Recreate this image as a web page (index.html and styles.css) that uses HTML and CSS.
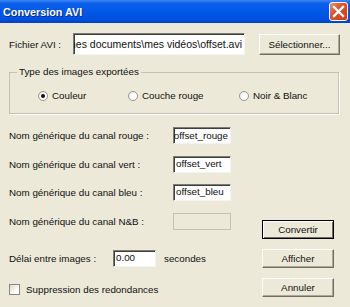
FILE: index.html
```html
<!DOCTYPE html>
<html lang="fr">
<head>
  <meta charset="UTF-8">
  <title>Conversion AVI</title>
  <link rel="stylesheet" href="styles.css">
</head>
<body>
  <div class="window">
    <div class="titlebar">
      <span class="title">Conversion AVI</span>
      <span class="close">
        <svg width="13" height="13" viewBox="0 0 13 13"><path d="M2 2 L11 11 M11 2 L2 11" stroke="#fff" stroke-width="2.4" stroke-linecap="square"/></svg>
      </span>
    </div>

    <div class="content">
      <div class="file-row">
        <span class="file-label">Fichier AVI :</span>
        <div class="field file-field"><span>c:\mes documents\mes vidéos\offset.avi</span></div>
        <div class="btn select-btn">Sélectionner...</div>
      </div>

      <div class="group">
        <span class="legend">Type des images exportées</span>
        <div class="radios">
          <span class="opt opt-1"><span class="radio checked"></span>Couleur</span>
          <span class="opt opt-2"><span class="radio"></span>Couche rouge</span>
          <span class="opt"><span class="radio"></span>Noir &amp; Blanc</span>
        </div>
      </div>

      <div class="bottom">
        <div class="fields">
          <div class="row"><span class="lbl">Nom générique du canal rouge :</span><div class="field name-field scrolled"><span>offset_rouge</span></div></div>
          <div class="row"><span class="lbl">Nom générique du canal vert :</span><div class="field name-field">offset_vert</div></div>
          <div class="row"><span class="lbl">Nom générique du canal bleu :</span><div class="field name-field">offset_bleu</div></div>
          <div class="row"><span class="lbl">Nom générique du canal N&amp;B :</span><div class="field name-field disabled"></div></div>
          <div class="row delay-row"><span class="delay-lbl">Délai entre images :</span><div class="field delay-field">0.00</div><span class="unit">secondes</span></div>
          <div class="row check-row"><span class="check"></span>Suppression des redondances</div>
        </div>
        <div class="actions">
          <div class="btn default-btn">Convertir</div>
          <div class="btn">Afficher</div>
          <div class="btn">Annuler</div>
        </div>
      </div>
    </div>
  </div>
</body>
</html>
```

FILE: styles.css
```css
body {
  margin: 0;
  font-family: "Liberation Sans", Arial, sans-serif;
  font-size: 9.8px;
  color: #111;
}

.window {
  width: 350px;
  height: 307px;
  background: #ece9d8;
  overflow: hidden;
}

.titlebar {
  height: 23px;
  display: flex;
  align-items: center;
  justify-content: space-between;
  padding: 0 2px 0 3px;
  background: linear-gradient(#3d87f5 0%, #0a5fe9 15%, #0056e6 60%, #0050de 85%, #0044c4 100%);
  box-sizing: border-box;
}

.title {
  color: #fff;
  font-family: "Liberation Sans", Arial, sans-serif;
  font-weight: bold;
  font-size: 10.8px;
  text-shadow: 1px 1px 0 #0a2a8a;
}

.close {
  width: 19px;
  height: 19px;
  box-sizing: border-box;
  border: 1px solid #fff;
  border-radius: 3px;
  background: linear-gradient(135deg, #f0906e 0%, #e0522e 40%, #cc3a14 100%);
  display: flex;
  align-items: center;
  justify-content: center;
}

.content {
  padding: 10px 9px 0 9px;
}

/* ligne fichier */
.file-row {
  display: flex;
  align-items: center;
  height: 22px;
}

.file-label {
  width: 64px;
}

.field {
  background: #fff;
  box-sizing: border-box;
  border: 1px solid;
  border-color: #7c7b74 #f4f3ee #f4f3ee #7c7b74;
  box-shadow: inset 1px 1px 0 #3f3e3a;
  white-space: nowrap;
  overflow: hidden;
  padding: 2px 0 0 2px;
}

/* texte défilé : on voit la fin du texte */
.file-field,
.scrolled {
  display: flex;
  justify-content: flex-end;
  align-items: center;
  padding: 0 2px 0 0;
}

.file-field {
  width: 172px;
  height: 22px;
  font-size: 10.5px;
}

.btn {
  box-sizing: border-box;
  display: flex;
  align-items: center;
  justify-content: center;
  border: 1px solid;
  border-color: #fff #716f64 #716f64 #fff;
  box-shadow: inset -1px -1px 0 #aca899;
  background: #ece9d8;
  width: 72px;
  height: 19px;
}

.select-btn {
  margin-left: 14px;
  width: 81px;
  height: 21px;
}

/* groupe radio */
.group {
  position: relative;
  margin-top: 17px;
  height: 42px;
  width: 330px;
  box-sizing: border-box;
  border: 1px solid #c4c2b6;
  box-shadow: 1px 1px 0 #fff;
}

.legend {
  position: absolute;
  left: 7px;
  top: -7px;
  padding: 0 2px;
  background: #ece9d8;
}

.radios {
  display: flex;
  padding: 17px 0 0 28px;
}

.opt {
  display: flex;
  align-items: center;
  gap: 4px;
}

.opt-1 { width: 90px; }
.opt-2 { width: 111px; }

.radio {
  width: 10px;
  height: 10px;
  border-radius: 50%;
  box-sizing: border-box;
  border: 1px solid #9a988e;
  background: radial-gradient(circle at 65% 65%, #fff 45%, #dcdad0 100%);
  position: relative;
}

.radio.checked::after {
  content: "";
  position: absolute;
  left: 2px;
  top: 2px;
  width: 4px;
  height: 4px;
  border-radius: 50%;
  background: #111;
}

/* bas du formulaire */
.bottom {
  display: flex;
  justify-content: space-between;
  margin-top: 13px;
  padding-right: 7px;
}

.fields {
  display: flex;
  flex-direction: column;
  gap: 11.5px;
}

.row {
  display: flex;
  align-items: center;
  height: 17px;
}

.lbl {
  width: 164px;
}

.name-field {
  width: 58px;
  height: 17px;
  padding-top: 1px;
}

.scrolled {
  padding-top: 0;
}

.disabled {
  background: #ece9d8;
  border-color: #c4c2b6;
  box-shadow: none;
}

.delay-row {
  margin-top: 9px;
}

.delay-lbl {
  width: 104px;
}

.delay-field {
  width: 43px;
  height: 17px;
  padding-top: 1px;
}

.unit {
  margin-left: 8px;
}

.check-row {
  margin-top: 2px;
  gap: 6px;
}

.check {
  width: 11px;
  height: 11px;
  box-sizing: border-box;
  border: 1px solid #8a887e;
  background: linear-gradient(135deg, #dcdad0, #fff 70%);
}

.actions {
  display: flex;
  flex-direction: column;
  justify-content: flex-end;
  gap: 10px;
  padding-bottom: 1px;
}

.default-btn {
  border: 1px solid #000;
  box-shadow: inset 1px 1px 0 #fff, inset -1px -1px 0 #716f64;
}
```
